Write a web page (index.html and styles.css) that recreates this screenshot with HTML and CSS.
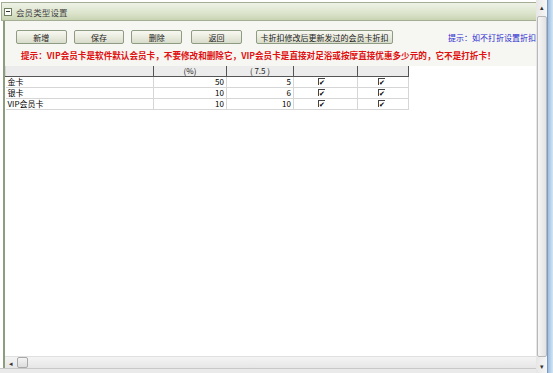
FILE: index.html
```html
<!DOCTYPE html>
<html lang="zh-CN">
<head>
    <meta charset="utf-8">
    <title>会员类型设置</title>
    <link rel="stylesheet" href="styles.css">
</head>
<body>
    <div class="frame">
        <div class="main">
            <div class="titlebar">
                <span class="collapse"></span>
                <span class="title">会员类型设置</span>
            </div>
            <div class="panel">
                <div class="toolbar">
                    <button class="btn">新增</button>
                    <button class="btn">保存</button>
                    <button class="btn">删除</button>
                    <button class="btn">返回</button>
                    <button class="btn wide">卡折扣修改后更新发过的会员卡折扣</button>
                    <span class="tip">提示：如不打折设置折扣</span>
                </div>
                <div class="warn">提示：VIP会员卡是软件默认会员卡，不要修改和删除它，VIP会员卡是直接对足浴或按摩直接优惠多少元的，它不是打折卡！</div>
                <div class="grid-area">
                    <table class="grid">
                        <tr class="head">
                            <th class="c1"></th>
                            <th class="c2">(%)</th>
                            <th class="c3">( 7.5 )</th>
                            <th class="c4"></th>
                            <th class="c5"></th>
                        </tr>
                        <tr>
                            <td>金卡</td><td class="num">50</td><td class="num">5</td>
                            <td><span class="chk">✔</span></td><td><span class="chk">✔</span></td>
                        </tr>
                        <tr>
                            <td>银卡</td><td class="num">10</td><td class="num">6</td>
                            <td><span class="chk">✔</span></td><td><span class="chk">✔</span></td>
                        </tr>
                        <tr>
                            <td>VIP会员卡</td><td class="num">10</td><td class="num">10</td>
                            <td><span class="chk">✔</span></td><td><span class="chk">✔</span></td>
                        </tr>
                    </table>
                </div>
                <div class="hscroll">
                    <span class="arrow">◂</span>
                    <span class="hthumb"></span>
                </div>
            </div>
            <div class="bottom"></div>
        </div>
        <div class="vscroll">
            <span class="arrow">▴</span>
            <span class="vthumb"></span>
            <span class="arrow">▾</span>
        </div>
        <div class="edge"></div>
    </div>
</body>
</html>
```

FILE: styles.css
```css
body { margin: 0; background: #fff; font-family: "Noto Sans CJK SC", "DejaVu Sans", sans-serif; font-size: 8px; color: #000; }
.frame { display: flex; width: 553px; height: 373px; overflow: hidden; }
.main { width: 536px; display: flex; flex-direction: column; }

.titlebar { margin: 2px 0 0 1px; height: 17px; display: flex; align-items: center; gap: 4px; padding-left: 2px;
    background: linear-gradient(#eef2e6, #dce4cc 60%, #c9d4b3); border: 1px solid #a3ae94; border-right: none; }
.collapse { width: 6px; height: 6px; border: 1px solid #6f7f60; background: #fff; position: relative; }
.collapse::after { content: ""; position: absolute; left: 1px; right: 1px; top: 2px; height: 1px; background: #333; }
.title { font-size: 8.5px; color: #444; letter-spacing: 0.1px; }

.panel { flex: 1; display: flex; flex-direction: column; border-left: 2px solid #8e9e7c; margin-left: 3px; background: #fff; }
.toolbar { display: flex; align-items: center; height: 27px; padding: 5px 0 0 11px; box-sizing: border-box; background: #f6f6f2; }
.btn { width: 51px; height: 14px; margin-right: 7px; padding: 0; font: inherit; font-size: 8px; color: #222; border: 1px solid #8f9c84; border-radius: 2px;
    background: linear-gradient(#f8f8f2, #e8eadc 55%, #d8dccb); }
.btn:nth-child(3) { margin-right: 9px; }
.btn:nth-child(4) { margin-right: 14px; }
.btn.wide { width: 138px; margin-right: 0; }
.tip { margin-left: 55px; color: #2a2ad0; font-size: 8px; white-space: nowrap; }

.warn { height: 18px; line-height: 14px; padding-left: 16px; color: #e01010; font-weight: bold; font-size: 8.6px; white-space: nowrap; background: #f6f6f2; }

.grid-area { flex: 1; background: #fff; }
.grid { border-collapse: collapse; table-layout: fixed; }
.grid td, .grid th { height: 10px; padding: 0 2px; line-height: 10px; font-size: 8px; font-weight: normal; border: 1px solid #d6d6d6; white-space: nowrap; }
.grid .head th { background: #ececec; border-top: none; border-right: 1px solid #555; border-bottom: 1px solid #555; color: #222; }
.grid .c1 { width: 143px; }
.grid .c2 { width: 68px; }
.grid .c3 { width: 62px; }
.grid .c4 { width: 59px; }
.grid .c5 { width: 46px; }
.grid .num { text-align: right; }
.grid td:first-child { border-left: none; }
.chk { display: inline-block; width: 6px; height: 6px; border: 1px solid #444; border-width: 1px 0 0 1px; font-size: 7px; line-height: 6px; text-align: center; margin-left: 22px; }
.grid td:nth-child(5) .chk { margin-left: 18px; }

.hscroll { height: 11px; display: flex; align-items: center; gap: 4px; padding-left: 4px; background: linear-gradient(#f4f4f4, #e6e6e6); border-top: 1px solid #e0e0e0; }
.hscroll .arrow { font-size: 7px; color: #333; }
.hthumb { width: 9px; height: 9px; border: 1px solid #a8a8a8; border-radius: 2px; background: linear-gradient(#f4f4f4, #dcdcdc); }
.bottom { height: 4px; background: #eaeaea; border-top: 1px solid #c8c8c8; }

.vscroll { width: 12px; display: flex; flex-direction: column; align-items: center; background: linear-gradient(90deg, #e6e6e6, #f6f6f6); }
.vscroll .arrow { font-size: 7px; color: #333; height: 14px; line-height: 14px; }
.vthumb { flex: 1; width: 10px; margin: 2px 0; border: 1px solid #b8b8b8; border-radius: 2px; box-sizing: border-box; background: linear-gradient(90deg, #f6f6f6, #e2e2e2); }
.edge { width: 5px; background: linear-gradient(90deg, #9cbde0, #d4e6f6); border-left: 1px solid #7a9cc4; }
```
